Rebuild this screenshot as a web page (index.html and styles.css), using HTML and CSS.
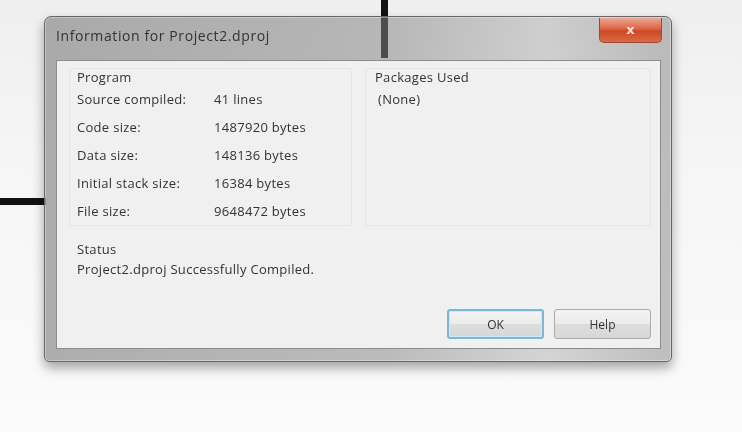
FILE: index.html
```html
<!DOCTYPE html>
<html lang="en">
<head>
    <meta charset="UTF-8">
    <meta name="viewport" content="width=device-width, initial-scale=1.0">
    <title>Information for Project2.dproj</title>
    <link rel="stylesheet" href="styles.css">
</head>
<body>
    <div class="desk">
        <div class="wire-v"></div>
        <div class="wire-h"></div>

        <div class="window">
            <div class="titlebar">
                <span class="title">Information for Project2.dproj</span>
                <button class="close-button">x</button>
            </div>
            <div class="client">
                <div class="groups">
                    <div class="group group-program">
                        <div class="group-caption">Program</div>
                        <div class="info-row"><span class="info-label">Source compiled:</span><span>41 lines</span></div>
                        <div class="info-row"><span class="info-label">Code size:</span><span>1487920 bytes</span></div>
                        <div class="info-row"><span class="info-label">Data size:</span><span>148136 bytes</span></div>
                        <div class="info-row"><span class="info-label">Initial stack size:</span><span>16384 bytes</span></div>
                        <div class="info-row"><span class="info-label">File size:</span><span>9648472 bytes</span></div>
                    </div>
                    <div class="group group-packages">
                        <div class="group-caption">Packages Used</div>
                        <div class="package-item">(None)</div>
                    </div>
                </div>
                <div class="status">
                    <div class="status-caption">Status</div>
                    <div class="status-text">Project2.dproj Successfully Compiled.</div>
                </div>
                <div class="buttons">
                    <button class="dlg-button dlg-button-default">OK</button>
                    <button class="dlg-button">Help</button>
                </div>
            </div>
        </div>
    </div>
</body>
</html>
```

FILE: styles.css
```css
body {
    margin: 0;
    font-family: "Open Sans", "Liberation Sans", sans-serif;
    font-size: 13px;
    letter-spacing: 0.3px;
    color: #333;
}
.desk {
    position: relative;
    width: 742px;
    height: 432px;
    overflow: hidden;
    padding: 16px 0 0 44px;
    box-sizing: border-box;
    background: linear-gradient(#efefef, #f6f6f6 40%, #fbfbfb);
    filter: blur(0.4px);
}
/* wires of the diagram behind the dialog */
.wire-v {
    position: absolute;
    left: 381px;
    top: 0;
    width: 7px;
    height: 58px;
    background: #111;
}
.wire-h {
    position: absolute;
    left: 0;
    top: 198px;
    width: 46px;
    height: 7px;
    background: #111;
}
.window {
    position: relative;
    width: 628px;
    height: 346px;
    box-sizing: border-box;
    padding: 0 10px 12px 11px;
    border: 1px solid #666;
    border-radius: 7px 7px 5px 5px;
    background: linear-gradient(90deg, rgba(115,115,115,0.57), rgba(130,130,130,0.52) 55%, rgba(160,160,160,0.42) 80%, rgba(130,130,130,0.5));
    box-shadow: 0 6px 12px rgba(0,0,0,0.35), inset 0 0 0 1px rgba(255,255,255,0.35);
    display: flex;
    flex-direction: column;
}
.titlebar {
    height: 43px;
    display: flex;
    align-items: flex-start;
    margin-right: -1px;
}
.title {
    margin-top: 9px;
    font-size: 14px;
    letter-spacing: 0.6px;
    color: #333;
}
.close-button {
    margin-left: auto;
    margin-top: 1px;
    width: 63px;
    height: 25px;
    border: 1px solid #9a4a32;
    border-top: none;
    border-radius: 0 0 5px 5px;
    background: linear-gradient(#eba895, #dc6442 45%, #cc4a28 55%, #dc6a45);
    color: #f4e6e0;
    font-family: "DejaVu Sans", sans-serif;
    font-size: 13px;
    font-weight: bold;
    line-height: 20px;
    padding: 0;
}
.client {
    flex: 1;
    background: #f0f0f0;
    border: 1px solid #8c8c8c;
    display: flex;
    flex-direction: column;
    padding: 7px 9px 9px 12px;
}
.groups {
    display: flex;
    gap: 13px;
}
.group {
    height: 156px;
    border: 1px solid #e6e6e6;
    border-radius: 2px;
}
.group-program {
    width: 274px;
    padding-left: 7px;
}
.group-packages {
    flex: 1;
    padding-left: 9px;
}
.group-caption {
    line-height: 16px;
}
.info-row {
    display: flex;
    height: 28px;
    align-items: center;
}
.info-label {
    width: 137px;
}
.package-item {
    line-height: 28px;
    padding-left: 3px;
}
.status {
    margin-top: 13px;
    padding-left: 8px;
    line-height: 20px;
}
.buttons {
    margin-top: auto;
    display: flex;
    justify-content: flex-end;
    gap: 10px;
}
.dlg-button {
    width: 97px;
    height: 30px;
    border: 1px solid #acacac;
    border-radius: 3px;
    background: linear-gradient(#f3f3f3, #ebebeb 50%, #dddddd 51%, #d7d7d7);
    font-family: "Open Sans", "Liberation Sans", sans-serif;
    font-size: 12px;
    color: #333;
}
.dlg-button-default {
    border: 2px solid #7ab7d9;
    box-shadow: inset 0 0 0 1px #cde7f5;
}
```
